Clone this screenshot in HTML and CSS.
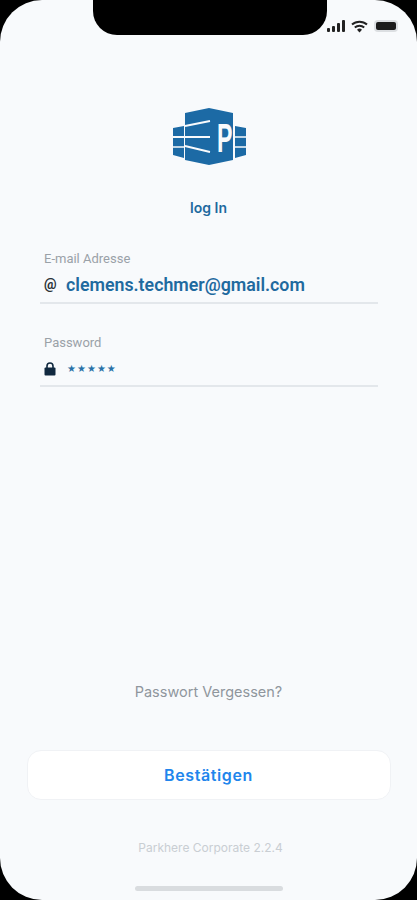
FILE: index.html
```html
<!DOCTYPE html>
<html lang="de">
<head>
  <meta charset="UTF-8">
  <title>Parkhere Login</title>
  <link rel="stylesheet" href="styles.css">
</head>
<body>
  <div class="screen">
    <div class="status-row">
      <div class="notch"></div>
      <div class="status-icons">
        <svg width="22" height="14" viewBox="0 0 22 14">
          <rect x="1" y="9" width="3" height="4" rx="1" fill="#222"/>
          <rect x="6" y="7" width="3" height="6" rx="1" fill="#222"/>
          <rect x="11" y="4" width="3" height="9" rx="1" fill="#222"/>
          <rect x="16" y="1" width="3" height="12" rx="1" fill="#222"/>
        </svg>
        <svg class="wifi" width="17" height="13" viewBox="0 0 17 13">
          <path d="M1 4.6a11 11 0 0 1 15 0" fill="none" stroke="#222" stroke-width="2"/>
          <path d="M3.8 7.6a7 7 0 0 1 9.4 0" fill="none" stroke="#222" stroke-width="2"/>
          <path d="M6 9.8a3.6 3.6 0 0 1 5 0l-2.5 2.8z" fill="#222"/>
        </svg>
        <div class="battery"><div class="battery-fill"></div></div>
      </div>
    </div>

    <svg class="logo" width="73" height="58" viewBox="0 0 73 58">
      <path d="M0 20l11-2v32L0 47z M62 18l11 2v27l-11 3z" fill="#1c6aa5"/>
      <path d="M12 5L36 0l24 5v47l-24 5-24-5z" fill="#1c6aa5"/>
      <path d="M0 29h11M0 39h11M62 29h11M62 39h11" stroke="#f8fafc" stroke-width="1.6"/>
      <path d="M12 18l25-5M0 29h37M12 38l25 6" stroke="#f8fafc" stroke-width="1.8" fill="none"/>
      <text class="logo-letter" x="44" y="44">P</text>
    </svg>

    <h1 class="title">log In</h1>

    <div class="field field-email">
      <label class="field-label">E-mail Adresse</label>
      <div class="field-value">
        <span class="at">@</span>
        <span class="email">clemens.techmer@gmail.com</span>
      </div>
    </div>

    <div class="field field-pass">
      <label class="field-label">Password</label>
      <div class="field-value">
        <svg class="lock" width="12" height="14" viewBox="0 0 12 14">
          <path d="M3 6V4a3 3 0 0 1 6 0v2" fill="none" stroke="#10293f" stroke-width="1.6"/>
          <rect x="0.5" y="5.5" width="11" height="8" rx="1" fill="#10293f"/>
        </svg>
        <span class="stars">★★★★★</span>
      </div>
    </div>

    <a class="forgot">Passwort Vergessen?</a>
    <button class="confirm">Bestätigen</button>
    <div class="version">Parkhere Corporate 2.2.4</div>
    <div class="home-bar"></div>
  </div>
</body>
</html>
```

FILE: styles.css
```css
html, body {
  margin: 0;
  height: 900px;
  background-color: #000000;
  overflow: hidden;
}

.screen {
  height: 900px;
  box-sizing: border-box;
  background-color: #f8fafc;
  border-radius: 42px;
  display: flex;
  flex-direction: column;
  align-items: center;
  font-family: Roboto, sans-serif;
  overflow: hidden;
}

.status-row {
  width: 100%;
  height: 36px;
  position: relative;
  flex-shrink: 0;
}

.notch {
  width: 234px;
  height: 35px;
  margin-left: 93px;
  background-color: #000000;
  border-radius: 0 0 24px 24px;
}

.status-icons {
  position: absolute;
  top: 19px;
  left: 326px;
  display: flex;
  align-items: center;
  gap: 3px;
}

.battery {
  width: 24px;
  height: 12px;
  box-sizing: border-box;
  margin-left: 3px;
  padding: 2px;
  background-color: #dcdfe2;
  border-radius: 4px;
}

.battery-fill {
  height: 100%;
  background-color: #1c1c1c;
  border-radius: 2px;
}

.logo {
  margin-top: 72px;
  margin-left: 2px;
  flex-shrink: 0;
}

.logo-letter {
  font-family: "Liberation Sans", sans-serif;
  font-size: 40px;
  font-weight: bold;
  fill: #f8fafc;
  transform: scaleX(0.58);
  transform-origin: 44px 44px;
}

.title {
  margin: 33px 0 0;
  font-family: Inter, sans-serif;
  font-size: 14px;
  line-height: 18px;
  font-weight: 600;
  color: #1f6a9f;
}

.field {
  width: 338px;
  margin-left: 1px;
  box-sizing: border-box;
  padding-left: 4px;
  border-bottom: 2px solid #e3e7eb;
}

.field-email {
  margin-top: 34px;
  height: 53px;
}

.field-pass {
  margin-top: 31px;
  height: 52px;
}

.field-label {
  display: block;
  font-size: 13px;
  line-height: 16px;
  color: #9aa1a8;
}

.field-value {
  display: flex;
  align-items: center;
  margin-top: 5px;
  height: 24px;
}

.at {
  width: 22px;
  font-size: 14px;
  font-weight: 700;
  color: #2b3238;
}

.email {
  font-size: 17.8px;
  font-weight: 600;
  color: #1f6a9f;
}

.lock {
  margin-top: 1px;
}

.stars {
  margin-left: 11px;
  font-family: "DejaVu Sans", sans-serif;
  font-size: 10px;
  letter-spacing: 1px;
  color: #2a72a8;
}

.forgot {
  margin-top: 296px;
  font-family: Inter, sans-serif;
  font-size: 14.5px;
  line-height: 18px;
  color: #8f969d;
}

.confirm {
  margin-top: 49px;
  width: 364px;
  height: 50px;
  flex-shrink: 0;
  background-color: #ffffff;
  border: 1px solid #f0f2f5;
  border-radius: 14px;
  font-family: Inter, sans-serif;
  font-size: 16px;
  font-weight: 600;
  letter-spacing: 0.6px;
  color: #2185ec;
}

.version {
  margin-top: 40px;
  margin-left: 4px;
  font-family: Inter, sans-serif;
  font-size: 12px;
  line-height: 16px;
  color: #c9ced3;
}

.home-bar {
  margin-top: 30px;
  width: 148px;
  height: 5px;
  background-color: #d9dcdf;
  border-radius: 3px;
}
```
